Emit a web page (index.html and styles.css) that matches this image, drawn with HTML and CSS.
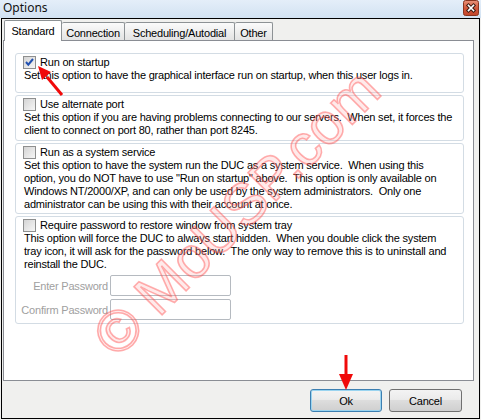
FILE: index.html
```html
<!DOCTYPE html>
<html lang="en">
<head>
    <meta charset="UTF-8">
    <title>Options</title>
    <link rel="stylesheet" href="styles.css">
</head>
<body>
    <div class="window">
        <div class="titlebar">
            <span class="title">Options</span>
            <span class="close">
                <svg width="16" height="16" viewBox="0 0 16 16">
                    <defs>
                        <linearGradient id="red" x1="0" y1="0" x2="0" y2="1">
                            <stop offset="0" stop-color="#e9937a"/>
                            <stop offset="0.5" stop-color="#d2573a"/>
                            <stop offset="1" stop-color="#c2452a"/>
                        </linearGradient>
                    </defs>
                    <rect x="0.5" y="0.5" width="15" height="15" rx="2" fill="url(#red)" stroke="#8a3520"/>
                    <path d="M5.5 5.5 L10.5 10.5 M10.5 5.5 L5.5 10.5" stroke="#3d1a12" stroke-width="3.6" stroke-linecap="square"/>
                    <path d="M5.5 5.5 L10.5 10.5 M10.5 5.5 L5.5 10.5" stroke="#fff" stroke-width="1.6" stroke-linecap="square"/>
                </svg>
            </span>
        </div>
        <div class="frame">
            <div class="tabs">
                <div class="tab active tab-standard">Standard</div>
                <div class="tab tab-connection">Connection</div>
                <div class="tab tab-schedule">Scheduling/Autodial</div>
                <div class="tab tab-other">Other</div>
            </div>
            <div class="panel">
                <div class="group g1">
                    <div class="check">
                        <span class="box">
                            <svg width="11" height="11" viewBox="0 0 11 11"><path d="M2 5 L4.3 7.6 L9 2" fill="none" stroke="#2150b0" stroke-width="2"/></svg>
                        </span>
                        Run on startup
                    </div>
                    <p>Set this option to have the graphical interface run on startup, when this user logs in.</p>
                </div>
                <div class="group g2">
                    <div class="check"><span class="box"></span>Use alternate port</div>
                    <p>Set this option if you are having problems connecting to our servers.&nbsp; When set, it forces the<br>client to connect on port 80, rather than port 8245.</p>
                </div>
                <div class="group g3">
                    <div class="check"><span class="box"></span>Run as a system service</div>
                    <p>Set this option to have the system run the DUC as a system service.&nbsp; When using this<br>option, you do NOT have to use "Run on startup" above.&nbsp; This option is only available on<br>Windows NT/2000/XP, and can only be used by the system administrators.&nbsp; Only one<br>administrator can be using this with their account at once.</p>
                </div>
                <div class="group g4">
                    <div class="check"><span class="box"></span>Require password to restore window from system tray</div>
                    <p>This option will force the DUC to always start hidden.&nbsp; When you double click the system<br>tray icon, it will ask for the password below.&nbsp; The only way to remove this is to uninstall and<br>reinstall the DUC.</p>
                    <div class="passwords">
                        <span class="field-label">Enter Password</span>
                        <span class="field"></span>
                        <span class="field-label">Confirm Password</span>
                        <span class="field"></span>
                    </div>
                </div>
            </div>
            <div class="buttons">
                <button class="btn btn-ok">Ok</button>
                <button class="btn btn-cancel">Cancel</button>
            </div>
        </div>

        <div class="watermark">&copy; MoUSP.com</div>

        <svg class="arrows" width="481" height="420" viewBox="0 0 481 420">
            <line x1="62" y1="95" x2="47" y2="77" stroke="#f00a0a" stroke-width="3"/>
            <polygon points="38,66 51,72 42,80" fill="#f00a0a"/>
            <line x1="346" y1="355" x2="346" y2="376" stroke="#f00a0a" stroke-width="3"/>
            <polygon points="339,374 353,374 346,390" fill="#f00a0a"/>
        </svg>
    </div>
</body>
</html>
```

FILE: styles.css
```css
body {
    margin: 0;
    padding: 0;
    background: #fff;
    font-family: "Liberation Sans", Arial, sans-serif;
    font-size: 11px;
    letter-spacing: -0.2px;
    color: #000;
}
.window {
    position: relative;
    width: 481px;
    height: 420px;
    overflow: hidden;
    background: #f0f0ee;
}
.titlebar {
    height: 18px;
    display: flex;
    align-items: flex-start;
    justify-content: space-between;
    background: linear-gradient(#e4eef9, #d2e2f2);
}
.title {
    font-family: "Noto Sans", sans-serif;
    font-size: 12px;
    letter-spacing: 0;
    line-height: 16px;
    padding-left: 3px;
    color: #111;
}
.close {
    width: 16px;
    height: 16px;
    margin-right: 2px;
}
.close svg {
    display: block;
}
.frame {
    margin: 0 1px;
    height: 401px;
    box-sizing: border-box;
    border: 1px solid #000;
    background: #f0f0ee;
}
.tabs {
    display: flex;
    align-items: flex-end;
    height: 20px;
    margin-top: 1px;
    padding-left: 2px;
}
.tab {
    box-sizing: border-box;
    height: 18px;
    padding-top: 4px;
    line-height: 13px;
    text-align: center;
    border: 1px solid #8d9295;
    border-bottom: none;
    border-radius: 2px 2px 0 0;
    background: linear-gradient(#fbfbfb, #e3e3e3);
}
.tab.active {
    position: relative;
    z-index: 1;
    height: 21px;
    margin-bottom: -1px;
    background: #fff;
}
.tab-standard { width: 58px; }
.tab-connection { width: 63px; border-left: none; }
.tab-schedule { width: 110px; border-left: none; }
.tab-other { width: 38px; border-left: none; }
.panel {
    margin-left: 1px;
    width: 471px;
    height: 341px;
    box-sizing: border-box;
    border: 1px solid #8a8d94;
    background: #fff;
    padding: 12px 0 0 11px;
    display: flex;
    flex-direction: column;
    gap: 2px;
}
.group {
    box-sizing: border-box;
    width: 449px;
    border: 1px solid #d3dce4;
    border-radius: 3px;
    padding: 2px 0 0 7px;
}
.g1 { height: 40px; }
.g2 { height: 46px; }
.g3 { height: 71px; }
.g4 { height: 108px; }
.group p {
    margin: 0 0 0 1px;
    line-height: 13px;
    white-space: nowrap;
}
.check {
    display: flex;
    align-items: center;
    height: 13px;
    line-height: 13px;
    gap: 4px;
}
.box {
    box-sizing: border-box;
    width: 13px;
    height: 13px;
    border: 1px solid #8e8f8f;
    background: linear-gradient(135deg, #d4d4d4, #f6f6f6);
}
.box svg {
    display: block;
}
.passwords {
    display: grid;
    grid-template-columns: 85px 121px;
    column-gap: 2px;
    row-gap: 3px;
    margin-top: 4px;
    align-items: center;
}
.field-label {
    justify-self: end;
    white-space: nowrap;
    color: #a0a0a0;
}
.field {
    box-sizing: border-box;
    height: 21px;
    border: 1px solid #b5bac0;
    border-radius: 2px;
    background: #fff;
}
.buttons {
    display: flex;
    justify-content: flex-end;
    gap: 7px;
    margin-top: 8px;
    padding-right: 17px;
}
.btn {
    box-sizing: border-box;
    height: 23px;
    padding: 0;
    font-family: inherit;
    font-size: 11px;
    letter-spacing: -0.2px;
    color: #000;
    border: 1px solid #707070;
    border-radius: 3px;
    background: linear-gradient(#f3f3f3 0%, #ebebeb 45%, #dddddd 50%, #cfcfcf 100%);
}
.btn-ok {
    width: 72px;
    border-color: #3c7fb1;
    box-shadow: inset 0 0 0 1px #9ad4f0;
}
.btn-cancel {
    width: 73px;
}
.watermark {
    position: absolute;
    left: 236px;
    top: 212px;
    transform: translate(-50%, -50%) rotate(-45deg);
    font-size: 58px;
    letter-spacing: 0;
    white-space: nowrap;
    color: rgba(255, 170, 170, 0.25);
    -webkit-text-stroke: 1.6px rgba(255, 60, 60, 0.4);
    pointer-events: none;
}
.arrows {
    position: absolute;
    left: 0;
    top: 0;
    pointer-events: none;
}
```
